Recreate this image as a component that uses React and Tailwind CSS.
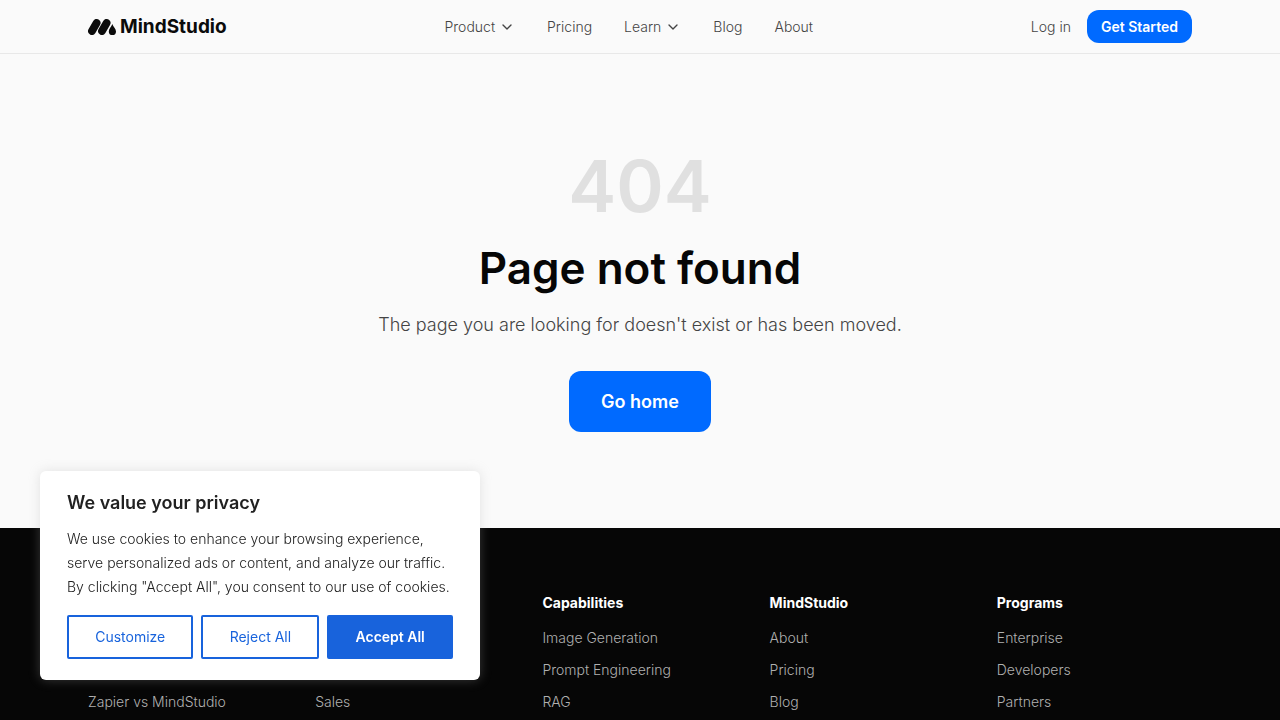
import { ChevronDown } from 'lucide-react';

const navItems = [
    { label: 'Product', menu: true },
    { label: 'Pricing' },
    { label: 'Learn', menu: true },
    { label: 'Blog' },
    { label: 'About' },
];

const footerColumns = [
    { links: ['Zapier vs MindStudio'] },
    { links: ['Sales'] },
    { title: 'Capabilities', links: ['Image Generation', 'Prompt Engineering', 'RAG'] },
    { title: 'MindStudio', links: ['About', 'Pricing', 'Blog'] },
    { title: 'Programs', links: ['Enterprise', 'Developers', 'Partners'] },
];

function Logo() {
    return (
        <a href="#" className="flex items-center gap-1 text-[#0b0b0b]">
            <svg width="28" height="16" viewBox="0 0 28 16" fill="none" aria-hidden="true">
                <path d="M4 12 L8.6 4 M14 12 L18.6 4" stroke="currentColor" strokeWidth="7.8" strokeLinecap="round" />
                <path d="M24.3 5 C25.2 7.8 28 9.6 28 12.4 A3.6 3.6 0 0 1 20.8 12.4 C20.8 9.6 23.4 7.8 24.3 5 Z" fill="currentColor" />
            </svg>
            <span className="text-[19px] leading-6 font-bold">MindStudio</span>
        </a>
    );
}

function Header() {
    return (
        <header className="border-b border-[#e8e8e8]">
            <div className="mx-auto flex max-w-6xl items-center justify-between px-6 py-[10px]">
                <Logo />
                <nav className="flex items-center gap-8 text-sm font-light text-[#444]">
                    {navItems.map(item =>
                        item.menu ? (
                            <button key={item.label} type="button" className="flex items-center gap-1">
                                {item.label}
                                <ChevronDown size={16} strokeWidth={2} />
                            </button>
                        ) : (
                            <a key={item.label} href="#">{item.label}</a>
                        )
                    )}
                </nav>
                <div className="flex items-center gap-4 text-sm">
                    <a href="#" className="font-light text-[#444]">Log in</a>
                    <a href="#" className="rounded-xl bg-[#006aff] px-[14px] py-[6px] leading-[21px] font-semibold text-white">
                        Get Started
                    </a>
                </div>
            </div>
        </header>
    );
}

function Footer() {
    return (
        <footer className="grow bg-[#060606] pt-16 pb-2">
            <div className="mx-auto grid max-w-6xl grid-cols-5 gap-8 px-6 text-sm">
                {footerColumns.map(col => (
                    <div key={col.links[0]} className="flex flex-col justify-end">
                        {col.title && (
                            <h2 className="mb-[14px] leading-[22px] font-bold text-white">{col.title}</h2>
                        )}
                        <ul className="flex flex-col gap-3 font-light text-[#b0b0b0]">
                            {col.links.map(link => (
                                <li key={link}>
                                    <a href="#" className="block whitespace-nowrap">{link}</a>
                                </li>
                            ))}
                        </ul>
                    </div>
                ))}
            </div>
        </footer>
    );
}

function CookieBanner() {
    return (
        <section
            aria-label="Cookie consent"
            className="fixed bottom-10 left-10 w-[440px] rounded-md bg-white px-[27px] pt-5 pb-[21px] text-[#212121] shadow-[0_0_12px_rgba(172,171,171,0.3)]"
        >
            <h2 className="mb-3 text-lg leading-6 font-semibold">We value your privacy</h2>
            <p className="mb-4 text-sm leading-6 font-light">
                We use cookies to enhance your browsing experience, serve personalized ads or content, and
                analyze our traffic. By clicking "Accept All", you consent to our use of cookies.
            </p>
            <div className="flex gap-2 text-sm leading-6 whitespace-nowrap">
                <button type="button" className="h-11 grow rounded-xs border-2 border-[#1863dc] text-[#1863dc]">
                    Customize
                </button>
                <button type="button" className="h-11 grow rounded-xs border-2 border-[#1863dc] text-[#1863dc]">
                    Reject All
                </button>
                <button type="button" className="h-11 grow rounded-xs border-2 border-[#1863dc] bg-[#1863dc] font-semibold text-white">
                    Accept All
                </button>
            </div>
        </section>
    );
}

export default function App() {
    return (
        <div className="flex min-h-screen flex-col bg-[#fafafa] font-['Inter',sans-serif]">
            <Header />
            <main className="flex flex-col items-center px-6 py-24 text-center">
                <p className="text-7xl leading-none font-semibold text-[#e0e0e0]">404</p>
                <h1 className="mt-5 text-[44px] leading-[52px] font-semibold text-[#060606]">Page not found</h1>
                <p className="mt-4 text-lg leading-[29px] font-light text-[#444]">
                    The page you are looking for doesn't exist or has been moved.
                </p>
                <a href="#" className="mt-8 rounded-xl bg-[#006aff] px-8 py-4 text-lg leading-[29px] font-semibold text-white">
                    Go home
                </a>
            </main>
            <Footer />
            <CookieBanner />
        </div>
    );
}
